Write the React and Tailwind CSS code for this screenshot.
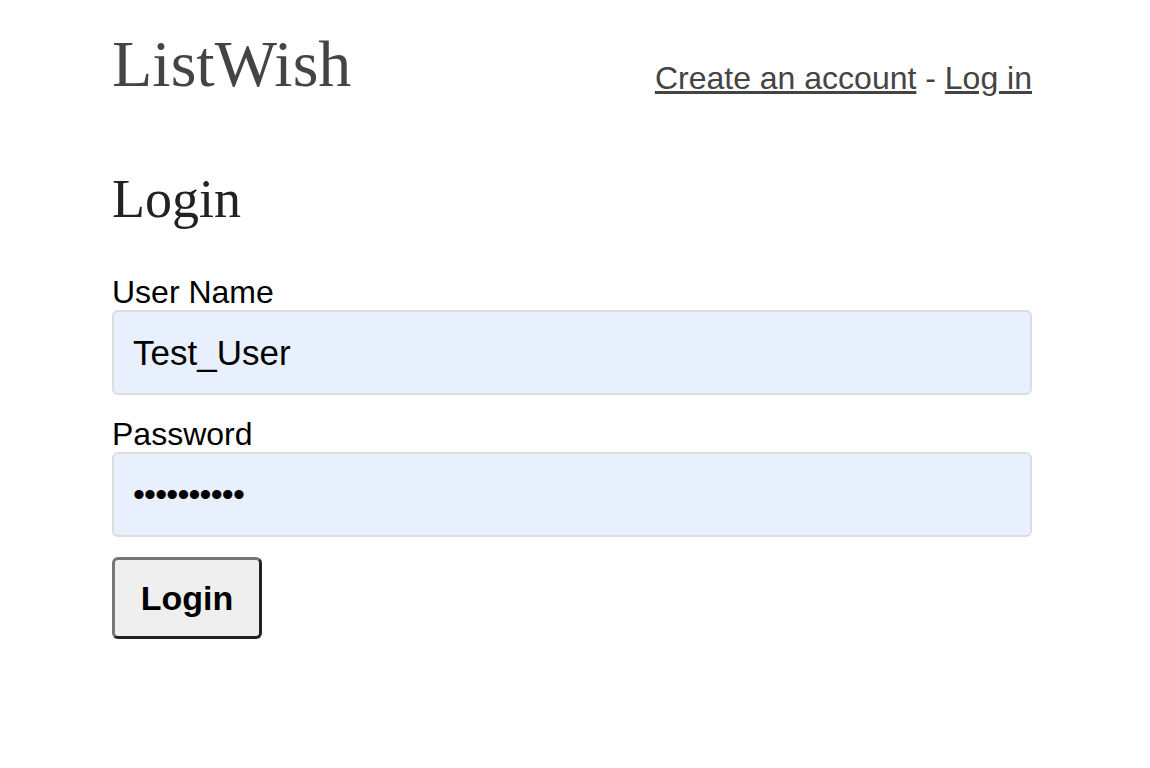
import React from "react";

export default function App() {
  const sans = { fontFamily: '"Liberation Sans", Arial, sans-serif' };
  return (
    <div className="min-h-[768px] bg-white">
      <div className="ml-[112px] w-[920px]" style={sans}>
        <header className="flex justify-between pt-[28px]">
          <h1
            className="text-[66px] leading-[72px] text-[#444] font-normal"
            style={{ fontFamily: '"Liberation Serif", "Times New Roman", serif' }}
          >
            ListWish
          </h1>
          <nav className="mt-[32px] text-[32px] leading-[36px] text-[#444]">
            <a href="#" className="underline">Create an account</a>
            <span> - </span>
            <a href="#" className="underline">Log in</a>
          </nav>
        </header>
        <h2
          className="mt-[69px] text-[54px] leading-[60px] text-[#222] font-normal"
          style={{ fontFamily: '"Liberation Serif", "Times New Roman", serif' }}
        >
          Login
        </h2>
        <form className="mt-[45px] flex flex-col" onSubmit={(e) => e.preventDefault()}>
          <label className="block text-[32px] leading-[36px] text-black">User Name</label>
          <input
            type="text"
            defaultValue="Test_User"
            className="h-[85px] w-full rounded-[6px] border-2 border-[#dcdcdc] bg-[#e8f0fe] pl-[19px] text-[35px] text-black outline-none"
          />
          <label className="mt-[21px] block text-[32px] leading-[36px] text-black">Password</label>
          <input
            type="password"
            defaultValue="password12"
            className="h-[85px] w-full rounded-[6px] border-2 border-[#dcdcdc] bg-[#e8f0fe] pl-[19px] text-[34px] tracking-[-0.8px] text-black outline-none"
          />
          <div className="mt-[20px]">
            <button
              type="submit"
              className="h-[82px] w-[150px] rounded-[6px] border-[3px] border-t-[#767676] border-l-[#767676] border-b-[#222] border-r-[#222] bg-[#efefef] text-[34px] font-bold text-black"
            >
              Login
            </button>
          </div>
        </form>
      </div>
    </div>
  );
}
